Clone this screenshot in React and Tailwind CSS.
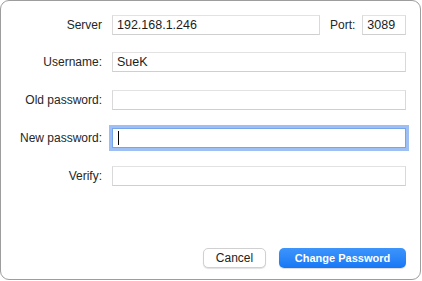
import React from "react";

function Row({ label, children, className = "" }) {
  return (
    <div className={`flex items-center h-5 ${className}`}>
      <div className="w-[101px] shrink-0 text-right text-[12px] text-[#262626] leading-none">{label}</div>
      <div className="ml-[10px] flex-1 flex items-center h-5">{children}</div>
    </div>
  );
}

function Field({ value, className = "", focused = false }) {
  return (
    <div
      className={`h-5 flex items-center pl-[4px] text-[12.5px] text-[#1c1c1c] bg-white border ${
        focused
          ? "border-[#76a5ec] ring-[3px] ring-[#9dbff3]"
          : "border-[#d9d9d9] border-b-[#cfcfcf] border-t-[#e2e2e2]"
      } ${className}`}
    >
      {focused ? <span className="w-px h-[14px] bg-black ml-[1px]" /> : value}
    </div>
  );
}

export default function App() {
  return (
    <div className="w-[422px] h-[281px] bg-white" style={{ fontFamily: '"Liberation Sans", Arial, sans-serif' }}>
      <div className="w-[421px] h-[280px] border border-[#9d9d9d] rounded-[9px] bg-white flex flex-col pt-[14px] pr-[14px] pb-[11px]">
        <Row label="Server">
          <Field value="192.168.1.246" className="w-[208px]" />
          <span className="ml-[10px] text-[12px] text-[#262626]">Port:</span>
          <Field value="3089" className="ml-[7px] flex-1" />
        </Row>
        <Row label="Username:" className="mt-[17px]">
          <Field value="SueK" className="flex-1" />
        </Row>
        <Row label="Old password:" className="mt-[18px]">
          <Field value="" className="flex-1" />
        </Row>
        <Row label="New password:" className="mt-[18px]">
          <Field focused className="flex-1" />
        </Row>
        <Row label="Verify:" className="mt-[18px]">
          <Field value="" className="flex-1" />
        </Row>
        <div className="mt-auto flex justify-end gap-[13px]">
          <button className="w-[63px] h-5 rounded-[5px] bg-white border border-[#d0d0d0] shadow-[0_1px_1px_rgba(0,0,0,0.12)] text-[12px] text-[#222] leading-none">
            Cancel
          </button>
          <button className="w-[127px] h-5 rounded-[5px] bg-gradient-to-b from-[#3d95fb] to-[#1677f5] text-[11px] font-bold text-white leading-none shadow-[0_1px_1px_rgba(0,0,0,0.15)]">
            Change Password
          </button>
        </div>
      </div>
    </div>
  );
}
